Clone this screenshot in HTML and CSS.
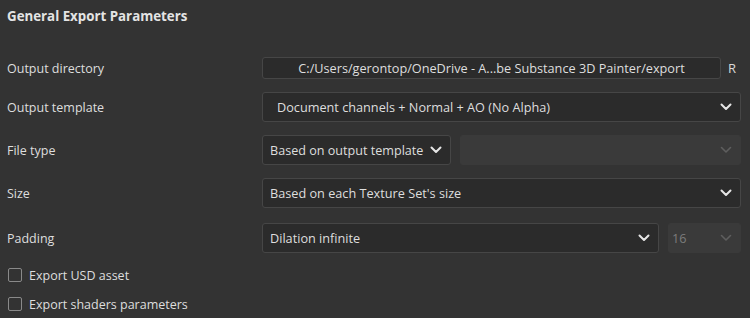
FILE: index.html
```html
<!DOCTYPE html>
<html>
<head>
<meta charset="utf-8">
<link rel="stylesheet" href="styles.css">
</head>
<body>
<div class="panel">
  <div class="title">General Export Parameters</div>
  <div class="rows">
    <div class="row row-dir">
      <div class="label">Output directory</div>
      <div class="ctrl">
        <div class="field path">C:/Users/gerontop/OneDrive - A...be Substance 3D Painter/export</div>
        <div class="reset">R</div>
      </div>
    </div>
    <div class="row">
      <div class="label">Output template</div>
      <div class="ctrl">
        <div class="select wide pad-l">
          <span>Document channels + Normal + AO (No Alpha)</span>
          <svg class="chev" viewBox="0 0 12 8"><path d="M1.5 1.5 L6 6 L10.5 1.5"/></svg>
        </div>
      </div>
    </div>
    <div class="row">
      <div class="label">File type</div>
      <div class="ctrl">
        <div class="select filetype">
          <span>Based on output template</span>
          <svg class="chev" viewBox="0 0 12 8"><path d="M1.5 1.5 L6 6 L10.5 1.5"/></svg>
        </div>
        <div class="select disabled grow">
          <span></span>
          <svg class="chev" viewBox="0 0 12 8"><path d="M1.5 1.5 L6 6 L10.5 1.5"/></svg>
        </div>
      </div>
    </div>
    <div class="row">
      <div class="label">Size</div>
      <div class="ctrl">
        <div class="select wide">
          <span>Based on each Texture Set's size</span>
          <svg class="chev" viewBox="0 0 12 8"><path d="M1.5 1.5 L6 6 L10.5 1.5"/></svg>
        </div>
      </div>
    </div>
    <div class="row row-pad">
      <div class="label">Padding</div>
      <div class="ctrl">
        <div class="select grow">
          <span>Dilation infinite</span>
          <svg class="chev" viewBox="0 0 12 8"><path d="M1.5 1.5 L6 6 L10.5 1.5"/></svg>
        </div>
        <div class="select disabled small">
          <span>16</span>
          <svg class="chev" viewBox="0 0 12 8"><path d="M1.5 1.5 L6 6 L10.5 1.5"/></svg>
        </div>
      </div>
    </div>
  </div>
  <div class="checks">
    <label class="check"><span class="box"></span>Export USD asset</label>
    <label class="check"><span class="box"></span>Export shaders parameters</label>
  </div>
</div>
</body>
</html>
```
FILE: styles.css
```css
html, body {
  margin: 0;
  padding: 0;
  background: #333333;
  width: 750px;
  height: 318px;
  overflow: hidden;
}
.panel {
  font-family: "Open Sans", "Noto Sans", sans-serif;
  font-size: 12.5px;
  color: #dedede;
  padding: 0 9px 0 7px;
}
.title {
  font-weight: 700;
  font-size: 13.3px;
  height: 32px;
  line-height: 32px;
  color: #e4e4e4;
}
.rows {
  display: flex;
  flex-direction: column;
  gap: 13px;
  margin-top: 21px;
}
.row {
  display: flex;
  align-items: center;
  height: 30px;
}
.row-dir { margin-bottom: -4px; }
.row-pad { margin-top: 2px; }
.label {
  width: 255px;
  flex: none;
}
.ctrl {
  flex: 1;
  display: flex;
  align-items: center;
  gap: 9px;
  height: 100%;
}
.field, .select {
  box-sizing: border-box;
  background: #2b2b2b;
  border: 1px solid #464646;
  border-radius: 3px;
}
.path {
  width: 459px;
  height: 22px;
  line-height: 20px;
  text-align: center;
  white-space: nowrap;
  overflow: hidden;
  font-size: 12.7px;
}
.reset {
  margin-left: -2px;
  color: #d8d8d8;
  font-size: 13px;
}
.select {
  height: 30px;
  display: flex;
  align-items: center;
  justify-content: space-between;
  gap: 6px;
  padding: 0 8px 0 7px;
  font-size: 12.7px;
  white-space: nowrap;
}
.wide { flex: 1; }
.pad-l { padding-left: 14px; }
.grow { flex: 1; }
.filetype { width: 189px; flex: none; font-size: 12.6px; }
.small { width: 73px; flex: none; padding-left: 3px; }
.disabled {
  background: #3a3a3a;
  border-color: #3a3a3a;
  color: #7c7c7c;
}
.chev {
  flex: none;
  width: 12px;
  height: 8px;
  fill: none;
  stroke: #e6e6e6;
  stroke-width: 2;
  stroke-linecap: round;
  stroke-linejoin: round;
}
.disabled .chev { stroke: #5e5e5e; stroke-width: 1.6; }
.checks {
  display: flex;
  flex-direction: column;
  gap: 11px;
  margin-top: 13px;
}
.check {
  display: flex;
  align-items: center;
  gap: 7px;
  height: 18px;
  padding-left: 1px;
}
.box {
  box-sizing: border-box;
  width: 14px;
  height: 14px;
  border: 1.5px solid #8a8a8a;
  border-radius: 2px;
}
```
